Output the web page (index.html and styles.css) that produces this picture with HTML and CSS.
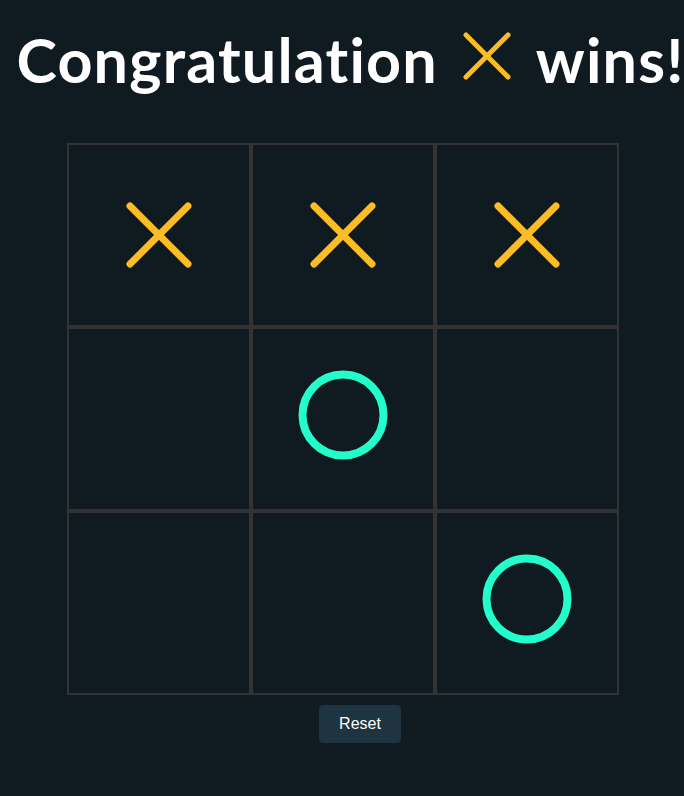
FILE: index.html
```html
<!DOCTYPE html>
<html>
<head>
<meta charset="utf-8">
<link rel="stylesheet" href="styles.css">
</head>
<body>
<div class="app">
  <h1 class="title">Congratulation <svg class="title-x" viewBox="0 0 48 48" width="48" height="48"><line x1="3" y1="3" x2="45" y2="45"/><line x1="45" y1="3" x2="3" y2="45"/></svg> wins!</h1>
  <div class="board">
    <div class="cell"><svg class="mark-x" viewBox="0 0 68 68" width="68" height="68"><line x1="5" y1="5" x2="63" y2="63"/><line x1="63" y1="5" x2="5" y2="63"/></svg></div>
    <div class="cell"><svg class="mark-x" viewBox="0 0 68 68" width="68" height="68"><line x1="5" y1="5" x2="63" y2="63"/><line x1="63" y1="5" x2="5" y2="63"/></svg></div>
    <div class="cell"><svg class="mark-x" viewBox="0 0 68 68" width="68" height="68"><line x1="5" y1="5" x2="63" y2="63"/><line x1="63" y1="5" x2="5" y2="63"/></svg></div>
    <div class="cell"></div>
    <div class="cell"><svg class="mark-o" viewBox="0 0 90 90" width="90" height="90"><circle cx="45" cy="45" r="40.5"/></svg></div>
    <div class="cell"></div>
    <div class="cell"></div>
    <div class="cell"></div>
    <div class="cell"><svg class="mark-o" viewBox="0 0 90 90" width="90" height="90"><circle cx="45" cy="45" r="40.5"/></svg></div>
  </div>
  <button class="reset">Reset</button>
</div>
</body>
</html>
```
FILE: styles.css
```css
html, body {
  margin: 0;
  padding: 0;
  background: #101a21;
  height: 100%;
}
.app {
  display: flex;
  flex-direction: column;
  align-items: center;
  font-family: "Lato", "Open Sans", sans-serif;
}
.title {
  margin: 15px 0 38px 0;
  padding-left: 17px;
  font-size: 61px;
  font-weight: 700;
  letter-spacing: 1.2px;
  font-variant-ligatures: none;
  color: #ffffff;
  white-space: nowrap;
  line-height: 90px;
  text-align: center;
}
.title-x {
  margin: 0 10px 0 9px;
  vertical-align: 3px;
}
.title-x line {
  stroke: #fbbd23;
  stroke-width: 5;
  stroke-linecap: round;
}
.board {
  display: grid;
  grid-template-columns: repeat(3, 184px);
  grid-template-rows: repeat(3, 184px);
  margin-left: 2px;
}
.cell {
  box-sizing: border-box;
  border: 2px solid #333333;
  display: flex;
  align-items: center;
  justify-content: center;
}
.mark-x line {
  stroke: #fbbd23;
  stroke-width: 7;
  stroke-linecap: round;
}
.mark-o {
  margin-bottom: 8px;
}
.mark-o circle {
  fill: none;
  stroke: #23fdcb;
  stroke-width: 8;
}
.reset {
  margin-top: 10px;
  margin-left: 36px;
  width: 82px;
  height: 38px;
  border: none;
  border-radius: 4px;
  background: #1e3440;
  color: #ffffff;
  font-family: "Liberation Sans", Arial, sans-serif;
  font-size: 16px;
  padding: 0;
}
```
